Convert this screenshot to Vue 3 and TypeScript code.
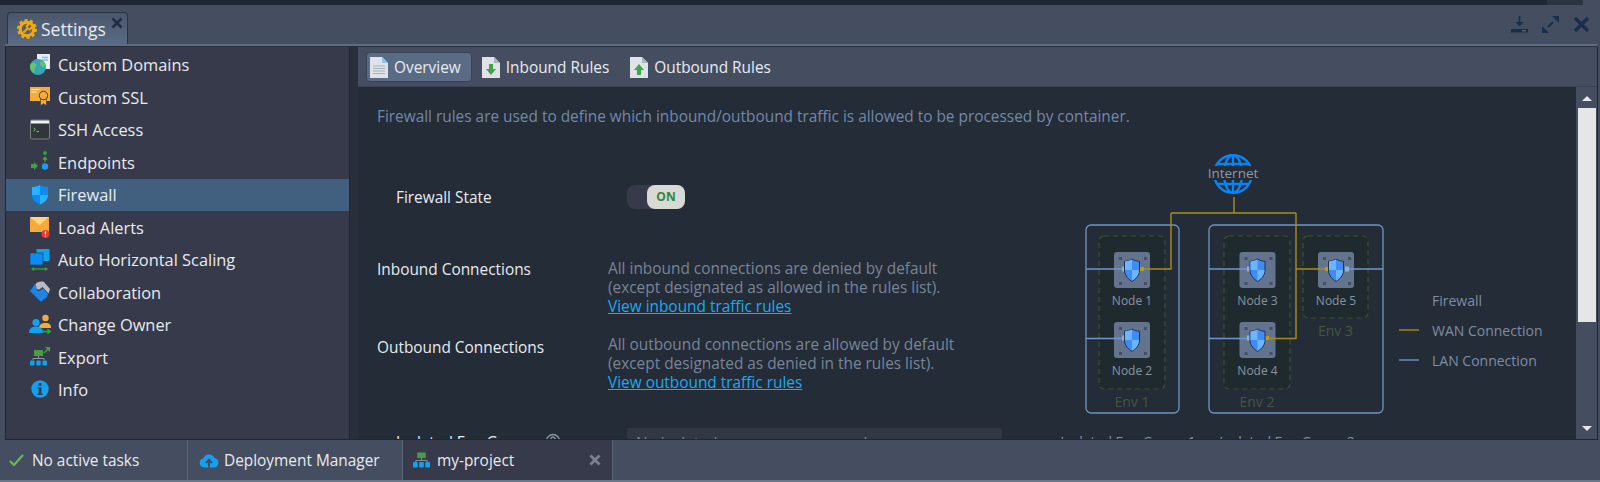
<script setup lang="ts">
interface MenuItem {
  label: string
  icon: string
}

interface NodeBox {
  x: number
  y: number
  label: string
}

const menu: MenuItem[] = [
  {
    label: 'Custom Domains',
    icon: `<rect x="7" y="0" width="13" height="15" fill="#e9edf0"/><path d="M12 3.500h6M12 6h6" stroke="#7fc4e8" stroke-width="1.500"/><circle cx="8" cy="13" r="8" fill="#36a5b8"/><path d="M1 9.500c2-1.500 4-.5 5 .5s0 3-1 4 0 3-1 5c-2-1-4-3-4-6 0-1 .3-2.500 1-3.500zM11 7c2.500.5 4 2.500 4.500 5-2 1.500-4 .5-5-.5s-.5-3 .5-4.500z" fill="#6cc26a"/>`
  },
  {
    label: 'Custom SSL',
    icon: `<path d="M0 1h20v14H0z" fill="#f5ab3c"/><path d="M1.500 3.500h8M1.500 6h5" stroke="#fff" stroke-width="1.200"/><path d="M10.500 12v7.500l3-1.800 3 1.800V12z" fill="#f5ab3c" stroke="#373a4a" stroke-width=".6"/><circle cx="13.500" cy="9.500" r="4.200" fill="#f5ab3c" stroke="#373a4a" stroke-width="1"/>`
  },
  {
    label: 'SSH Access',
    icon: `<rect x=".5" y="1" width="19" height="19" rx="1" fill="#30363a" stroke="#7b7f86"/><rect x="1" y="1.500" width="18" height="3" fill="#f1f2f3"/><path d="M3.500 9l2 1.500-2 1.500" fill="none" stroke="#7fc97a" stroke-width=".9"/><path d="M6.500 12.500h2.500" stroke="#7fc97a" stroke-width=".9"/>`
  },
  {
    label: 'Endpoints',
    icon: `<path d="M1 13h3v-2l4 4-4 4v-2H1z" fill="#4b9b45"/><circle cx="15" cy="15.500" r="3.200" fill="#12a0f0"/><path d="M15 11V6.500M13 8.500l2-2.200 2 2.200" fill="none" stroke="#4b9b45" stroke-width="1.300"/><circle cx="15" cy="2" r="1.900" fill="#1db52b"/>`
  },
  {
    label: 'Firewall',
    icon: `<path d="M10 1c2 1.500 5 2 8 2v8c0 5-4 7.500-8 9.500C6 18.500 2 16 2 11V3c3 0 6-.5 8-2z" fill="#0a8cf5"/><path d="M10 1c-2 1.500-5 2-8 2v8h8zM10 11h8c0 5-4 7.500-8 9.500z" fill="#29b0ff"/>`
  },
  {
    label: 'Load Alerts',
    icon: `<path d="M0 1h19v15H0z" fill="#f5ab3c"/><path d="M0 1l9.500 8L19 1z" fill="#ffd57e"/><circle cx="15.500" cy="18" r="4" fill="#e23b35"/><path d="M15.500 15.500v3M15.500 19.500v1" stroke="#fff" stroke-width="1.300"/>`
  },
  {
    label: 'Auto Horizontal Scaling',
    icon: `<rect x="6.500" y="0" width="13" height="12" fill="#12a0f0"/><rect x="0" y="4" width="13" height="12" fill="#0a8cf5" stroke="#373a4a" stroke-width=".7"/><path d="M2 20h15" stroke="#1db52b" stroke-width="1.300"/><path d="M4 18l-3 2 3 2zM15 18l3 2-3 2z" fill="#1db52b"/>`
  },
  {
    label: 'Collaboration',
    icon: `<path d="M0 10L5 3l4 1.500L6.500 9c1.500 1.500 3.500 1 5-.5l1.500-1 5 5.500c.5 1-.5 2-1.500 1.500l.5 1c.5 1-1 2-2 1.500.5 1-1 2-2 1.500 0 1.500-1.500 2.500-3 1.500z" fill="#1a86e8"/><path d="M5.500 3C8 .5 12 0 14 1l6 7-1.500 4.500-6-6.500-2.500 2c-1 .8-2 .8-3 0z" fill="#b9bcc4"/>`
  },
  {
    label: 'Change Owner',
    icon: `<circle cx="15.500" cy="4" r="3.200" fill="#f5ab3c"/><path d="M9 14c0-3 2-5 6.500-5S21 11 21 14z" fill="#f5ab3c"/><circle cx="6" cy="8.500" r="3.600" fill="#12a0f0"/><path d="M-1 19c0-4 2-6.500 7-6.500s7 2.500 7 6.500z" fill="#12a0f0"/><path d="M11 17.500h8" stroke="#1db52b" stroke-width="1.500"/><path d="M17.500 14.500l4 3-4 3z" fill="#1db52b"/>`
  },
  {
    label: 'Export',
    icon: `<rect x="4" y="4" width="9" height="6" fill="#4b9b45"/><path d="M8.500 10v3M3 14v-1.500h11V14" fill="none" stroke="#8b93a3"/><rect x="0" y="14.500" width="4.500" height="5" rx="1" fill="#12a0f0"/><rect x="6.300" y="14.500" width="4.500" height="5" rx="1" fill="#12a0f0"/><rect x="12.500" y="14.500" width="4.500" height="5" rx="1" fill="#12a0f0"/><path d="M14 7l4-4" stroke="#4b9b45" stroke-width="1.500"/><path d="M15 1h5v5z" fill="#4b9b45"/>`
  },
  {
    label: 'Info',
    icon: `<circle cx="10" cy="10" r="8.700" fill="#12a0f0"/><rect x="8.500" y="4" width="3" height="2.800" fill="#373a4a"/><path d="M7.500 8.300h4v6.200h1.200v1.500h-5.200v-1.500h1.200V9.800H7.500z" fill="#373a4a"/>`
  }
]

const nodes: NodeBox[] = [
  { x: 1132, y: 270, label: 'Node 1' },
  { x: 1132, y: 340, label: 'Node 2' },
  { x: 1257.5, y: 270, label: 'Node 3' },
  { x: 1257.5, y: 340, label: 'Node 4' },
  { x: 1336, y: 270, label: 'Node 5' }
]

const groups = [
  { x: 1086, w: 93, tx: 1128, label: 'Isolated Env Group 1' },
  { x: 1209, w: 174, tx: 1287, label: 'Isolated Env Group 2' }
]

const envs = [
  { x: 1099, w: 66, h: 153, label: 'Env 1' },
  { x: 1224, w: 66, h: 153, label: 'Env 2' },
  { x: 1303, w: 65, h: 82, label: 'Env 3' }
]

const rivets = [
  [-13, -13],
  [12, -13],
  [-13, 12],
  [12, 12]
]

// small pads where a wire meets the firewall shield
const lanPads = [
  [1122, 266.5],
  [1122, 335.5],
  [1247, 266.5],
  [1247, 335.5],
  [1345, 266.5]
]
const wanPads = [
  [1140, 267],
  [1265, 336],
  [1325, 267]
]
</script>

<template>
  <div class="window">
    <div class="strip">
      <div class="strip-fill" />
      <div class="strip-mid" />
      <div class="strip-end" />
    </div>

    <div class="titlebar">
      <div class="tab">
        <svg class="tab-icon" viewBox="0 0 20 20">
          <circle cx="10" cy="10" r="6.800" fill="none" stroke="#f5aa0a" stroke-width="3" />
          <circle cx="10" cy="10" r="8.800" fill="none" stroke="#f5aa0a" stroke-width="2.400" stroke-dasharray="3 2.530" />
          <path d="M6.500 13.500l5-5M12.500 5.500a3 3 0 0 0-3 3M14.500 7.500a3 3 0 0 1-3 3" fill="none" stroke="#f5aa0a" stroke-width="1.800" />
        </svg>
        <span class="tab-label">Settings</span>
        <svg class="tab-close" viewBox="0 0 12 12">
          <path d="M1.500 1.500l9 9M10.500 1.500l-9 9" stroke="#1f2e42" stroke-width="2.600" />
        </svg>
      </div>
      <div class="tools">
        <svg viewBox="0 0 17 17">
          <path d="M8.500 0v9" stroke="#15304d" stroke-width="1.800" />
          <path d="M4.500 6l4 4.500 4-4.500z" fill="#15304d" />
          <rect x="0" y="13" width="17" height="3.500" fill="#15304d" />
          <rect x="11" y="14.300" width="4" height="1" fill="#6d7c90" />
        </svg>
        <svg viewBox="0 0 17 17">
          <path d="M6 11l5-5" stroke="#15304d" stroke-width="2" />
          <path d="M10 0h7v7zM0 10l7 7H0z" fill="#15304d" />
        </svg>
        <svg viewBox="0 0 17 17">
          <path d="M2 2l13 13M15 2L2 15" stroke="#15304d" stroke-width="3.400" />
        </svg>
      </div>
    </div>
    <div class="tabline" />

    <div class="main">
      <nav class="sidebar">
        <a v-for="item in menu" :key="item.label" class="menu-row" :class="{ active: item.label === 'Firewall' }">
          <svg class="menu-icon" viewBox="0 0 20 22" v-html="item.icon" />
          <span>{{ item.label }}</span>
        </a>
      </nav>
      <div class="gutter" />

      <section class="panel">
        <div class="toolbar">
          <button class="tool-btn selected">
            <svg viewBox="0 0 18 21">
              <path d="M0 0h12l6 6v15H0z" fill="#dfe3e8" />
              <path d="M12 0l6 6h-6z" fill="#8cc4ee" />
              <path d="M3 9h12M3 11.500h12M3 14h12M3 16.500h12" stroke="#a9afb8" />
            </svg>
            Overview
          </button>
          <button class="tool-btn">
            <svg viewBox="0 0 18 21">
              <path d="M0 0h12l6 6v15H0z" fill="#dfe3e8" />
              <path d="M12 0l6 6h-6z" fill="#a9b2bd" />
              <path d="M7 7h4v5h3l-5 6-5-6h3z" fill="#3fa548" />
            </svg>
            Inbound Rules
          </button>
          <button class="tool-btn">
            <svg viewBox="0 0 18 21">
              <path d="M0 0h12l6 6v15H0z" fill="#dfe3e8" />
              <path d="M12 0l6 6h-6z" fill="#a9b2bd" />
              <path d="M7 18h4v-5h3L9 7l-5 6h3z" fill="#3fa548" />
            </svg>
            Outbound Rules
          </button>
        </div>

        <div class="body">
          <div class="scroll">
            <p class="intro">Firewall rules are used to define which inbound/outbound traffic is allowed to be processed by container.</p>
            <div class="columns">
              <div class="form">
                <div class="state-row">
                  <span class="state-label">Firewall State</span>
                  <div class="toggle"><span class="knob">ON</span></div>
                </div>
                <div class="conn-row first">
                  <span class="conn-label">Inbound Connections</span>
                  <div class="conn-text">
                    All inbound connections are denied by default<br />
                    (except designated as allowed in the rules list).<br />
                    <a class="link">View inbound traffic rules</a>
                  </div>
                </div>
                <div class="conn-row">
                  <span class="conn-label">Outbound Connections</span>
                  <div class="conn-text">
                    All outbound connections are allowed by default<br />
                    (except designated as denied in the rules list).<br />
                    <a class="link">View outbound traffic rules</a>
                  </div>
                </div>
                <div class="iso-row">
                  <span class="iso-label">Isolated Env Groups</span>
                  <svg class="help" viewBox="0 0 16 16">
                    <circle cx="8" cy="8" r="6.500" fill="none" stroke="#8a93a3" stroke-width="1.400" />
                    <path d="M5.800 6.300a2.200 2.200 0 1 1 3.400 1.800c-.8.500-1.200 1-1.200 2" fill="none" stroke="#8a93a3" stroke-width="1.400" />
                  </svg>
                  <div class="iso-input">No isolated env groups are used</div>
                </div>
              </div>

              <svg class="diagram" viewBox="1070 140 500 300">
                <rect v-for="g in groups" :key="g.label" :x="g.x" y="225" :width="g.w" height="188" rx="5" fill="none" stroke="#6f94c4" stroke-width="1.300" />
                <g v-for="e in envs" :key="e.label">
                  <rect :x="e.x" y="236" :width="e.w" :height="e.h" rx="5" fill="#1f2a2f" stroke="#3e5030" stroke-dasharray="5 4" stroke-width="1.200" />
                  <text :x="e.x + e.w / 2" :y="236 + e.h + 18" class="env-text">{{ e.label }}</text>
                </g>

                <g v-for="n in nodes" :key="n.label" :transform="`translate(${n.x} ${n.y})`">
                  <rect x="-18" y="-18" width="36" height="36" rx="3" fill="#64748e" />
                  <rect v-for="(r, i) in rivets" :key="i" :x="r[0]" :y="r[1]" width="3" height="3" fill="#474f5f" />
                  <text y="35" class="node-text">{{ n.label }}</text>
                </g>

                <path d="M1086 269h38M1086 338.500h38M1209 269h40M1209 338.500h40M1347 269h36" fill="none" stroke="#6f97cc" stroke-width="1.300" />
                <path d="M1234 197v16M1171 213h125M1171 213v56h-30M1296 213v125.500h-30M1296 269h30" fill="none" stroke="#a88d1a" stroke-width="1.400" />
                <rect v-for="(p, i) in lanPads" :key="i" :x="p[0]" :y="p[1]" width="4" height="5" fill="#8fb0dc" />
                <rect v-for="(p, i) in wanPads" :key="i" :x="p[0]" :y="p[1]" width="4" height="4" fill="#c09a10" />

                <g v-for="n in nodes" :key="n.label" :transform="`translate(${n.x} ${n.y})`">
                  <path d="M0-11c2.500 1.500 5 2.200 7.500 2.200V0C7.500 6 3 9.500 0 11.500-3 9.500-7.500 6-7.500 0v-8.800C-5-8.800-2.500-9.500 0-11z" fill="#3f8cf5" stroke="#1f3350" stroke-width="1" />
                  <path d="M0-10.500c-2.500 1.200-5 1.800-7 1.800V0h7zM0 0h7C7 5.500 3 8.800 0 10.800z" fill="#6db6ff" />
                </g>

                <g fill="none" stroke="#0a84f0" stroke-width="2.400">
                  <circle cx="1233" cy="174" r="18.800" />
                  <ellipse cx="1233" cy="174" rx="9" ry="18.800" />
                  <path d="M1233 155v38M1217 164h32M1217 184h32" />
                </g>
                <rect x="1208" y="166" width="50" height="14" fill="#232c37" />
                <text x="1233" y="178" class="internet-text">Internet</text>

                <text v-for="g in groups" :key="g.label" :x="g.tx" y="447" class="group-text">{{ g.label }}</text>

                <path d="M1399 330h20" stroke="#a88d1a" stroke-width="1.400" />
                <path d="M1399 360h20" stroke="#6f97cc" stroke-width="1.400" />
                <text x="1432" y="306" class="legend">Firewall</text>
                <text x="1432" y="336" class="legend">WAN Connection</text>
                <text x="1432" y="366" class="legend">LAN Connection</text>
              </svg>
            </div>
          </div>
          <div class="scrollbar">
            <span class="arrow up" />
            <div class="track"><div class="thumb" /></div>
            <span class="arrow down" />
          </div>
        </div>
      </section>
    </div>

    <footer class="footer">
      <div class="tasks">
        <svg viewBox="0 0 15 13">
          <path d="M1 7l4 4 9-10" fill="none" stroke="#6bb85a" stroke-width="2.200" />
        </svg>
        No active tasks
      </div>
      <div class="foot-tab deploy">
        <svg viewBox="0 0 20 16" class="cloud">
          <path d="M5 15.500a4.500 4.500 0 0 1-.7-8.900A6 6 0 0 1 15.500 6a4.800 4.800 0 0 1-.5 9.500z" fill="#12a0f0" />
          <path d="M10 15.500V9M7 11l3-3.200 3 3.200" fill="none" stroke="#454e60" stroke-width="2" />
        </svg>
        Deployment Manager
      </div>
      <div class="foot-tab project">
        <svg viewBox="0 0 18 16" class="tree">
          <rect x="4.500" y="0" width="9" height="6" fill="#4b9b45" />
          <path d="M9 6v3M3 11V8.500h12V11" fill="none" stroke="#8b93a3" />
          <rect x="0" y="10" width="5" height="6" rx="1" fill="#12a0f0" />
          <rect x="6.500" y="10" width="5" height="6" rx="1" fill="#12a0f0" />
          <rect x="13" y="10" width="5" height="6" rx="1" fill="#12a0f0" />
        </svg>
        <span class="project-name">my-project</span>
        <svg viewBox="0 0 12 12" class="foot-close">
          <path d="M1.500 1.500l9 9M10.500 1.500l-9 9" stroke="#7a8290" stroke-width="2.800" />
        </svg>
      </div>
    </footer>
    <div class="bottom-line" />
  </div>
</template>

<style>
html,
body {
  margin: 0;
  background: #454e60;
}
</style>

<style scoped>
.window {
  width: 1600px;
  height: 482px;
  overflow: hidden;
  display: flex;
  flex-direction: column;
  background: #454e60;
  font-family: "Open Sans", "Noto Sans", sans-serif;
  font-size: 15.400px;
  color: #e8ebef;
}

.strip {
  height: 5px;
  flex: none;
  display: flex;
}
.strip-fill {
  flex: 1;
  background: #1e2733;
}
.strip-mid {
  width: 36px;
  background: #2a3340;
}
.strip-end {
  width: 17px;
  background: #454e60;
}

.titlebar {
  height: 39px;
  flex: none;
  display: flex;
  align-items: flex-end;
  justify-content: space-between;
  padding-left: 7px;
  padding-right: 10px;
}
.tab {
  width: 121px;
  height: 32px;
  box-sizing: border-box;
  display: flex;
  align-items: center;
  padding: 0 0 0 9px;
  border: 1px solid #2a3340;
  border-bottom: 0;
  border-radius: 4px 4px 0 0;
  background: linear-gradient(#4b566b, #5a6b85);
  position: relative;
}
.tab-icon {
  width: 20px;
  height: 20px;
  margin-right: 4px;
}
.tab-label {
  font-size: 17.500px;
  line-height: 32px;
}
.tab-close {
  position: absolute;
  right: 4px;
  top: 4px;
  width: 12px;
  height: 12px;
}
.tools {
  display: flex;
  gap: 14px;
  padding-bottom: 11px;
}
.tools svg {
  width: 17px;
  height: 17px;
}
.tabline {
  height: 3px;
  flex: none;
  margin: 0 3px 0 5px;
  background: #5a6c86;
  border-bottom: 1px solid #2a2f3c;
  box-sizing: border-box;
}

.main {
  height: 393px;
  flex: none;
  display: flex;
  margin: 0 2px 0 5px;
  border: 1px solid #20262f;
  border-top: 0;
  box-sizing: border-box;
}
.sidebar {
  width: 343px;
  flex: none;
  padding-top: 1.500px;
  background: #373a4a;
  box-sizing: border-box;
}
.menu-row {
  height: 32.500px;
  display: flex;
  align-items: center;
  padding-left: 24px;
  font-size: 16.400px;
}
.menu-row.active {
  background: #41607f;
}
.menu-icon {
  width: 20px;
  height: 22px;
  margin-right: 8px;
  overflow: visible;
}
.gutter {
  width: 8px;
  flex: none;
  background: #2a2f3c;
  border-left: 1px solid #20262f;
}

.panel {
  flex: 1;
  min-width: 0;
  display: flex;
  flex-direction: column;
}
.toolbar {
  height: 40px;
  flex: none;
  box-sizing: border-box;
  display: flex;
  align-items: center;
  padding: 1px 0 0 8px;
  gap: 6px;
  border-bottom: 1px solid #3a4252;
}
.tool-btn {
  height: 30px;
  display: flex;
  align-items: center;
  gap: 6px;
  padding: 0 10px 0 3px;
  font: inherit;
  font-size: 15.400px;
  color: #e8ebef;
  background: none;
  border: 1px solid transparent;
  border-radius: 4px;
}
.tool-btn.selected {
  background: #5a6b85;
  border-color: #3a4252;
}
.tool-btn svg {
  width: 18px;
  height: 21px;
}

.body {
  flex: 1;
  min-height: 0;
  display: flex;
}
.scroll {
  flex: 1;
  min-width: 0;
  overflow: hidden;
  background: #232c37;
}
.intro {
  margin: 0;
  padding: 19px 0 0 19px;
  height: 34px;
  box-sizing: border-box;
  font-size: 15.400px;
  line-height: 22px;
  color: #7488ab;
  white-space: nowrap;
}
.columns {
  display: flex;
  margin-top: 19px;
}
.form {
  width: 712px;
  flex: none;
  padding-top: 45px;
  box-sizing: border-box;
}
.state-row {
  display: flex;
  align-items: center;
  height: 24px;
  padding-left: 38px;
}
.state-label {
  width: 231px;
}
.toggle {
  width: 58px;
  height: 24px;
  box-sizing: border-box;
  border-radius: 8px;
  background: #373a4a;
  display: flex;
  justify-content: flex-end;
}
.knob {
  width: 38px;
  height: 24px;
  border-radius: 8px;
  background: #d9d9d6;
  color: #2c8a3d;
  font-size: 12px;
  font-weight: 700;
  line-height: 24px;
  text-align: center;
}
.conn-row {
  display: flex;
  padding-left: 19px;
  margin-top: 19px;
}
.conn-row.first {
  margin-top: 50px;
}
.conn-label {
  width: 231px;
  flex: none;
  padding-top: 3px;
  line-height: 20px;
}
.conn-row.first .conn-label {
  padding-top: 1px;
}
.conn-text {
  line-height: 19px;
  color: #7a8499;
}
.link {
  color: #1fa8f0;
  text-decoration: underline;
}
.iso-row {
  display: flex;
  align-items: flex-start;
  padding-left: 38px;
  margin-top: 36px;
}
.iso-label {
  width: 149px;
  flex: none;
  line-height: 20px;
  padding-top: 5px;
  white-space: nowrap;
}
.help {
  width: 16px;
  height: 16px;
  flex: none;
  margin-top: 5px;
}
.iso-input {
  width: 375px;
  height: 28px;
  margin-left: 66px;
  box-sizing: border-box;
  padding: 5px 9px;
  background: #313843;
  color: #7a8499;
  border-radius: 2px;
  white-space: nowrap;
}
.diagram {
  width: 500px;
  height: 300px;
  flex: none;
  overflow: visible;
}
.diagram text {
  font-family: "Open Sans", "Noto Sans", sans-serif;
  text-anchor: middle;
}
.diagram .legend {
  text-anchor: start;
  font-size: 14px;
  fill: #7f8ca5;
}
.env-text {
  font-size: 14px;
  fill: #46563d;
}
.node-text {
  font-size: 12px;
  fill: #8893a5;
}
.internet-text {
  font-size: 13.500px;
  fill: #8f99a8;
}
.group-text {
  font-size: 14px;
  fill: #8893a5;
}

.scrollbar {
  width: 21px;
  flex: none;
  display: flex;
  flex-direction: column;
  align-items: center;
  background: #454e60;
}
.arrow {
  width: 0;
  height: 0;
  flex: none;
  border-left: 5px solid transparent;
  border-right: 5px solid transparent;
}
.arrow.up {
  margin-top: 9px;
  border-bottom: 5px solid #e8e8e8;
}
.arrow.down {
  margin-top: 2px;
  margin-bottom: 8px;
  border-top: 5px solid #e8e8e8;
}
.track {
  flex: 1;
  align-self: stretch;
  padding: 7px 1px 0 2px;
}
.thumb {
  height: 214px;
  background: #e6e6e6;
}

.footer {
  height: 40px;
  flex: none;
  display: flex;
  align-items: stretch;
  font-size: 15.400px;
}
.tasks {
  width: 188px;
  flex: none;
  box-sizing: border-box;
  display: flex;
  align-items: center;
  gap: 8px;
  padding-left: 9px;
  border-right: 1px solid #5a6478;
}
.tasks svg {
  width: 15px;
  height: 13px;
}
.foot-tab {
  display: flex;
  align-items: center;
  box-sizing: border-box;
}
.deploy {
  width: 214px;
  padding-left: 11px;
}
.cloud {
  width: 20px;
  height: 16px;
  margin-right: 5px;
}
.project {
  width: 211px;
  padding-left: 10px;
  background: #373a4a;
  border-left: 1px solid #5a6478;
  border-right: 1px solid #5a6478;
}
.tree {
  width: 17px;
  height: 16px;
  margin-right: 7px;
}
.project-name {
  flex: 1;
}
.foot-close {
  width: 12px;
  height: 12px;
  margin-right: 11px;
}
.bottom-line {
  flex: 1;
  background: #6b7789;
}
</style>
